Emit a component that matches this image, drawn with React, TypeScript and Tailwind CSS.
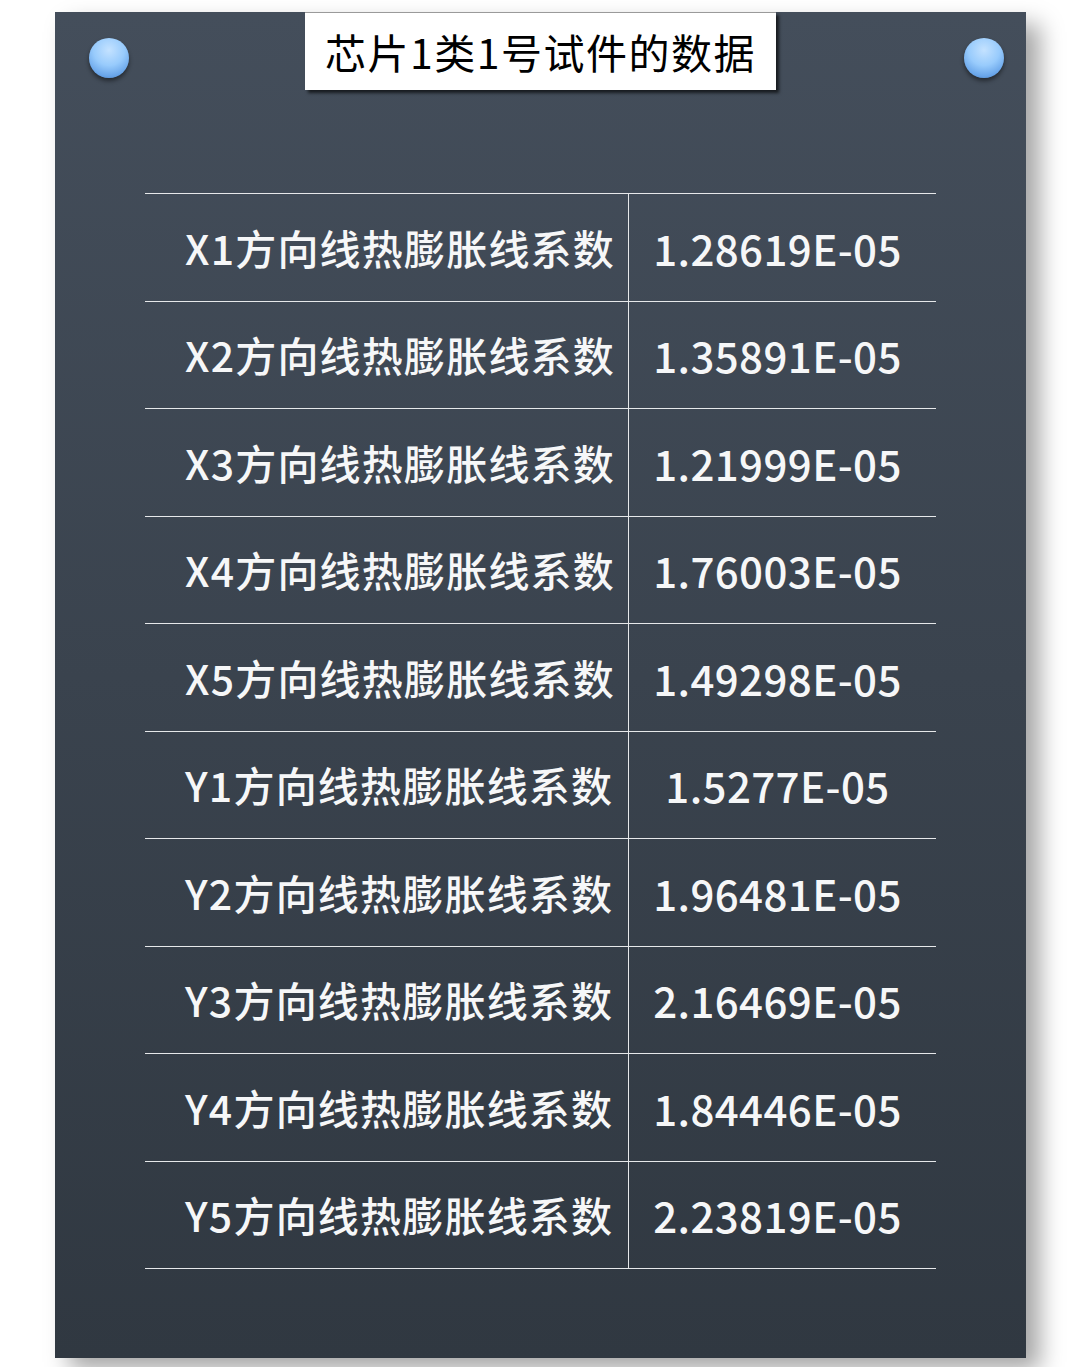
import React from 'react';

const rows: [string, string][] = [
  ['X1方向线热膨胀线系数', '1.28619E-05'],
  ['X2方向线热膨胀线系数', '1.35891E-05'],
  ['X3方向线热膨胀线系数', '1.21999E-05'],
  ['X4方向线热膨胀线系数', '1.76003E-05'],
  ['X5方向线热膨胀线系数', '1.49298E-05'],
  ['Y1方向线热膨胀线系数', '1.5277E-05'],
  ['Y2方向线热膨胀线系数', '1.96481E-05'],
  ['Y3方向线热膨胀线系数', '2.16469E-05'],
  ['Y4方向线热膨胀线系数', '1.84446E-05'],
  ['Y5方向线热膨胀线系数', '2.23819E-05'],
];

const Pin: React.FC<{ className: string }> = ({ className }) => (
  <div
    className={`absolute top-[26px] h-[40px] w-[40px] rounded-full bg-[radial-gradient(circle_at_50%_30%,#c4e2ff_0%,#98cbfc_45%,#6aa6ea_75%,#3f78bf_100%)] shadow-[0_3px_4px_rgba(0,0,0,0.45)] ${className}`}
  />
);

const App: React.FC = () => {
  return (
    <div className="h-[1367px] w-[1080px] bg-white pl-[55px] pt-[12px] font-['Noto_Sans_CJK_SC','Noto_Sans',sans-serif]">
      <div className="relative flex h-[1346px] w-[971px] flex-col bg-gradient-to-b from-[#444e5b] to-[#303841] shadow-[14px_12px_22px_rgba(0,0,0,0.35)]">
        <Pin className="left-[34px]" />
        <Pin className="right-[22px]" />

        <div className="mx-auto flex h-[78px] w-[471px] items-center justify-center border-t border-[#9a9a9a] bg-white shadow-[3px_3px_3px_rgba(0,0,0,0.65)]">
          <h1 className="text-[41px] font-normal leading-none tracking-[1.5px] text-black">芯片1类1号试件的数据</h1>
        </div>

        <div className="mx-[90px] mt-[103px] border-t border-[#e6e8ea]">
          {rows.map(([label, value]) => (
            <div key={label} className="flex h-[107.5px] border-b border-[#e6e8ea]">
              <div className="flex w-[484px] items-center border-r border-[#e6e8ea] pl-[40px] text-[41px] font-medium tracking-[1.2px] text-[#f6f7f8]">
                {label}
              </div>
              <div className="flex flex-1 items-center justify-center pr-[10px] text-[42px] font-medium tracking-[0.4px] text-[#f6f7f8]">
                {value}
              </div>
            </div>
          ))}
        </div>
      </div>
    </div>
  );
};

export default App;
